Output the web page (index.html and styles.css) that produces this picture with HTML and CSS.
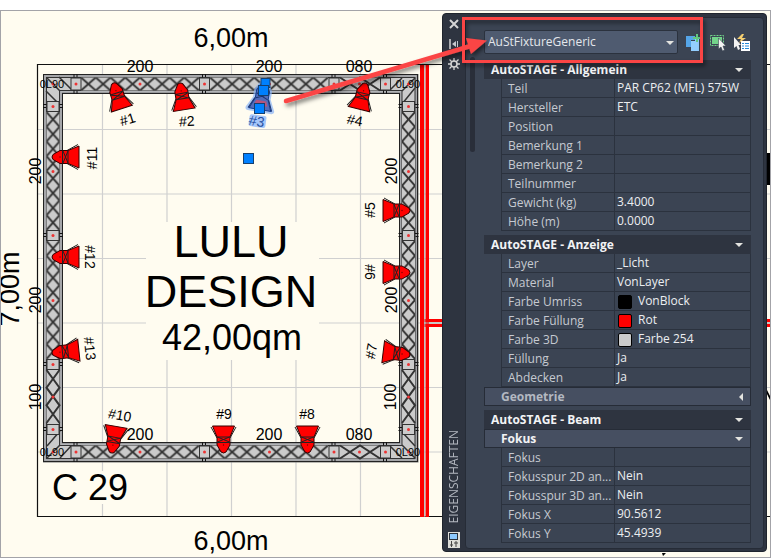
FILE: index.html
```html
<!DOCTYPE html>
<html lang="de">
<head>
<meta charset="utf-8">
<title>AutoSTAGE</title>
<link rel="stylesheet" href="styles.css">
</head>
<body>
<main class="workspace">
  <svg class="drawing" viewBox="0 0 771 558" role="img" aria-label="Standplan C 29">
    <defs>
      <clipPath id="sheet"><rect x="1" y="11" width="769" height="546"/></clipPath>
      <pattern id="lattice" width="14.75" height="13" patternUnits="userSpaceOnUse">
        <path class="brace" d="M0 0L14.75 13M0 13L14.75 0"/>
      </pattern>
      <g id="t200">
        <rect width="118" height="13" fill="#cbcbcb" y="-6.5"/>
        <rect width="118" height="13" fill="url(#lattice)" transform="translate(0 -6.5)"/>
      </g>
      <g id="t100">
        <rect width="53" height="13" fill="#cbcbcb" y="-6.5"/>
        <path class="brace" d="M0-6.5L17.7 6.5L35.3-6.5L53 6.5M0 6.5L17.7-6.5L35.3 6.5L53-6.5"/>
      </g>
      <g id="t080">
        <rect width="40" height="13" fill="#cbcbcb" y="-6.5"/>
        <path class="brace" d="M0-6.5L20 6.5L40-6.5M0 6.5L20-6.5L40 6.5"/>
      </g>
      <g id="joint">
        <rect x="-5" y="-6" width="10" height="12" fill="#cbcbcb" stroke="#333"/>
        <path d="M-2-10V-6.500M-2 6.500V10M1-10V-7M1 7V10" stroke="#111"/>
        <circle r="1.500" fill="#e33"/>
      </g>
      <g id="par">
        <path d="M-12.500 26L-6.500 15M12.500 26L6.500 15" stroke="#222" fill="none"/>
        <path d="M-2.500 1Q0-1 2.500 1L6.500 8V16L11 27H-11L-6.500 16V8Z" class="par-body"/>
        <path d="M-6.500 10.500H6.500M-6.500 16H6.500M-6 11L6 16M6 11L-6 16" stroke="#222" fill="none"/>
        <circle cy="8" r=".7" fill="#700"/>
      </g>
    </defs>
    <rect x=".5" y="10.500" width="770" height="547" fill="#fffcf0" stroke="#a3a3a8"/>
    <g clip-path="url(#sheet)">
      <path class="grid" d="M102.500 65V516M167 65V516M231.500 65V516M296 65V516M360.500 65V516M38 129.500H770M38 194H770M38 258.500H770M38 323H770M38 387.500H770M38 452H770"/>
      <path fill="#fffcf0" d="M146 222H319V360H146ZM50 471H131V504H50Z"/>
      <path d="M770 64.500H37.500V516.500H770" fill="none" stroke="#111" stroke-width="1.200"/>
      <path fill="#f00" d="M420 65H424V517H420ZM425.500 65H429V517H425.500ZM424 319H770V322H424ZM424 324H770V327H424Z"/>
      <path d="M424.800 65V517M424 323H770" stroke="#aaa"/>
      <path d="M767 153H771V185H767ZM767 390L771 398V402L767 394ZM662 553H666L663 556Z"/>

      <path fill="#777" fill-rule="evenodd" d="M43 74H418.500V462.500H43ZM63 94V442H399V94Z"/>
      <g fill="none" stroke="#222">
        <rect x="43.500" y="74.500" width="374" height="387"/>
        <rect x="62.500" y="93.500" width="337" height="349"/>
      </g>
      <g fill="none" stroke="#b5b7bb" stroke-width="1.500">
        <rect x="45" y="76" width="371" height="384"/>
        <rect x="61" y="91.800" width="340" height="352.400"/>
      </g>
      <g fill="none" stroke="#cbcbcb" stroke-width="13"><rect x="53" y="84" width="355.500" height="368"/></g>
      <g fill="none" stroke="#333">
        <rect x="46.500" y="77.500" width="368.500" height="381"/>
        <rect x="59.500" y="90.500" width="342.500" height="355"/>
      </g>
      <path stroke="#333" stroke-width="1.500" d="M47 78L60 91M59 77L72 90M46 91L59 104M415 78L402 91M402 104L415 88M390 90L402 78M47 458L60 445M47 446L60 431M60 458L71 446M415 458L402 445M402 432L415 446M390 446L402 458"/>
      <use href="#t200" x="81" y="84"/><use href="#t200" x="210" y="84"/><use href="#t080" x="340" y="84"/>
      <use href="#t200" x="81" y="452"/><use href="#t200" x="210" y="452"/><use href="#t080" x="340" y="452"/>
      <g transform="translate(53 112) rotate(90)"><use href="#t200"/><use href="#t200" x="129"/><use href="#t100" x="258"/></g>
      <g transform="translate(408.500 112) rotate(90)"><use href="#t200"/><use href="#t200" x="129"/><use href="#t100" x="258"/></g>
      <use href="#joint" x="76" y="84"/><use href="#joint" x="204.500" y="84"/><use href="#joint" x="334" y="84"/><use href="#joint" x="385.500" y="84"/>
      <use href="#joint" x="76" y="452"/><use href="#joint" x="204.500" y="452"/><use href="#joint" x="334" y="452"/><use href="#joint" x="385.500" y="452"/>
      <g transform="translate(53 0) rotate(90)"><use href="#joint" x="106.500"/><use href="#joint" x="235.500"/><use href="#joint" x="364.500"/><use href="#joint" x="429.500"/></g>
      <g transform="translate(408.500 0) rotate(90)"><use href="#joint" x="106.500"/><use href="#joint" x="235.500"/><use href="#joint" x="364.500"/><use href="#joint" x="429.500"/></g>
      <path class="dots" d="M140 84h0M269.500 84h0M359.500 84h0M140 452h0M269.500 452h0M359.500 452h0M53 171.500h0M53 300.500h0M53 397h0M408.500 171.500h0M408.500 300.500h0M408.500 397h0M53 84h0M408.500 84h0M53 452h0M408.500 452h0"/>

      <use href="#par" transform="translate(113.500 83) rotate(-18)"/>
      <use href="#par" transform="translate(180 83) rotate(-9)"/>
      <use href="#par" transform="translate(365.500 83) rotate(14)"/>
      <use href="#par" transform="translate(410 210.500) rotate(90)"/>
      <use href="#par" transform="translate(410 272.500) rotate(90)"/>
      <use href="#par" transform="translate(410 355) rotate(97)"/>
      <use href="#par" transform="translate(307.500 453) rotate(180)"/>
      <use href="#par" transform="translate(223.500 453) rotate(180)"/>
      <use href="#par" transform="translate(111.500 453) rotate(190)"/>
      <use href="#par" transform="translate(52 157) rotate(-90)"/>
      <use href="#par" transform="translate(52 257) rotate(-90)"/>
      <use href="#par" transform="translate(52 353) rotate(-96)"/>
      <g transform="translate(264.500 83) rotate(10)">
        <path d="M-2.500 1L2.500 1L6.500 8V16L12 27H-12L-6.500 16V8Z" fill="none" stroke="#8ab4f5" stroke-width="5" stroke-linejoin="round" opacity=".7"/>
        <path d="M-2.500 1L2.500 1L6.500 8V16L11 27H-11L-6.500 16V8Z" fill="#526dbb" stroke="#123a8c"/>
        <path d="M-7 23L7 23L5 18H-5Z" fill="#b4557d"/>
        <path d="M-6 11L6 16M6 11L-6 16M-12 27L-7 16M12 27L7 16" stroke="#1b3470"/>
      </g>
      <rect x="249" y="115" width="17" height="12" rx="2" fill="#a7c8fa" transform="rotate(8 257 121)"/>

      <g class="t14">
        <text transform="translate(129 124) rotate(-17)">#1</text>
        <text transform="translate(187 126) rotate(-3)">#2</text>
        <text transform="translate(256 126) rotate(9)" fill="#264f9e">#3</text>
        <text transform="translate(354 125) rotate(11)">#4</text>
        <text transform="translate(375 210) rotate(-90)">#5</text>
        <text transform="translate(365 272) rotate(90)">#6</text>
        <text transform="translate(376 352) rotate(-80)">#7</text>
        <text x="307" y="419">#8</text>
        <text x="224" y="419">#9</text>
        <text transform="translate(119 420) rotate(10)">#10</text>
        <text transform="translate(97 158) rotate(-90)">#11</text>
        <text transform="translate(85 257) rotate(90)">#12</text>
        <text transform="translate(85 349) rotate(84)">#13</text>
      </g>
      <g class="t16">
        <text x="140" y="72">200</text><text x="269" y="72">200</text><text x="359" y="72">080</text>
        <text x="140" y="440">200</text><text x="269" y="440">200</text><text x="359" y="440">080</text>
        <text transform="translate(41 171) rotate(-90)">200</text>
        <text transform="translate(41 300) rotate(-90)">200</text>
        <text transform="translate(41 397) rotate(-90)">100</text>
        <text transform="translate(397 171) rotate(-90)">200</text>
        <text transform="translate(397 300) rotate(-90)">200</text>
        <text transform="translate(396 397) rotate(-90)">100</text>
      </g>
      <g class="t11">
        <text x="52" y="88">0L90</text><text x="408" y="88">0L90</text>
        <text x="52" y="456">0L90</text><text x="408" y="456">0L90</text>
      </g>
      <g class="t27">
        <text x="231" y="47">6,00m</text><text x="231" y="550">6,00m</text>
        <text transform="translate(19 289) rotate(-90)">7,00m</text>
      </g>
      <text class="t45" x="231" y="257">LULU</text>
      <text class="t45" x="231" y="307">DESIGN</text>
      <text class="t36" x="232" y="350">42,00qm</text>
      <text class="t36" x="90" y="500">C 29</text>
      <g fill="#0080ff" stroke="#16406f">
        <rect x="261" y="78.500" width="9" height="9"/><rect x="258.500" y="85.500" width="10" height="10"/>
        <rect x="254.500" y="103.500" width="10" height="10"/><rect x="243.500" y="153.500" width="10" height="10"/>
      </g>
    </g>
  </svg>

  <aside class="palette" aria-label="Eigenschaften">
    <div class="strip">
      <button class="icon" aria-label="Schließen"><svg width="12" height="12" viewBox="0 0 12 12"><path d="M2 2L10 10M10 2L2 10" stroke="#d5d5d5" stroke-width="2"/></svg></button>
      <button class="icon" aria-label="Automatisch ausblenden"><svg width="12" height="12" viewBox="0 0 12 12"><path d="M2 1V11" stroke="#d5d5d5" stroke-width="1.500"/><path d="M8 3V9L4 6ZM9 3h1v6H9Z" fill="#c5c8cd"/></svg></button>
      <button class="icon" aria-label="Einstellungen"><svg width="12" height="12" viewBox="0 0 12 12"><path d="M6 0V12M0 6H12M1.500 1.500L10.500 10.500M10.500 1.500L1.500 10.500" stroke="#d5d5d5" stroke-width="1.300"/><circle cx="6" cy="6" r="3" fill="#2e3440" stroke="#d5d5d5" stroke-width="1.500"/></svg></button>
      <span class="name">EIGENSCHAFTEN</span>
      <svg class="mark" width="12" height="16" viewBox="0 0 12 16"><rect width="12" height="16" fill="#deded9"/><rect x="1.500" y="1.500" width="8" height="6" fill="#8dcaff" stroke="#29313c"/><path d="M3.500 9V15M8 9V15M2 13H5M6 11H10" stroke="#444"/></svg>
    </div>
    <div class="content">
      <div class="toolbar">
        <label class="combo"><select aria-label="Objekttyp"><option>AuStFixtureGeneric</option></select><i class="down"></i></label>
        <button class="icon" aria-label="PICKADD"><svg width="17" height="17" viewBox="0 0 17 17"><path d="M1 2h9v4H6v7H1Z" fill="#55a5e8"/><path d="M6 7H10V4H14V17H6Z" fill="#94ceff"/><path d="M12 0V8M8 4H17" stroke="#61c982" stroke-width="2"/></svg></button>
        <button class="icon" aria-label="Objekte wählen"><svg width="17" height="17" viewBox="0 0 17 17"><rect x="1.500" y="1.500" width="13" height="10" fill="none" stroke="#72d48a" stroke-dasharray="2 1"/><rect x="3" y="3" width="10" height="7" fill="#72d48a"/><path d="M9.500 4V15L12 13L13.500 17L15.500 16L14 12H17Z" fill="#f3f3f3" stroke="#3b4453" stroke-width=".6"/></svg></button>
        <button class="icon" aria-label="Schnellauswahl"><svg width="17" height="17" viewBox="0 0 17 17"><path d="M9 0L4 5H8L6 9L13 4H9L11 0Z" fill="#f5cf70"/><path d="M1 3V14L3.500 12L5 16L7 15L5.500 11H8Z" fill="#f3f3f3"/><rect x="8" y="7" width="9" height="10" fill="#fff"/><path d="M9 9.500H11M12 9.500H16M9 12H11M12 12H16M9 14.500H11M12 14.500H16" stroke="#2389d7"/></svg></button>
      </div>
      <div class="scroll"></div>
      <div class="sections">
        <section>
          <button class="head">AutoSTAGE - Allgemein<i class="down"></i></button>
          <table>
            <tr><th>Teil</th><td>PAR CP62 (MFL) 575W</td></tr>
            <tr><th>Hersteller</th><td>ETC</td></tr>
            <tr><th>Position</th><td></td></tr>
            <tr><th>Bemerkung 1</th><td></td></tr>
            <tr><th>Bemerkung 2</th><td></td></tr>
            <tr><th>Teilnummer</th><td></td></tr>
            <tr><th>Gewicht (kg)</th><td>3.4000</td></tr>
            <tr><th>Höhe (m)</th><td>0.0000</td></tr>
          </table>
        </section>
        <section>
          <button class="head">AutoSTAGE - Anzeige<i class="down"></i></button>
          <table>
            <tr><th>Layer</th><td>_Licht</td></tr>
            <tr><th>Material</th><td>VonLayer</td></tr>
            <tr><th>Farbe Umriss</th><td><i class="swatch black"></i>VonBlock</td></tr>
            <tr><th>Farbe Füllung</th><td><i class="swatch red"></i>Rot</td></tr>
            <tr><th>Farbe 3D</th><td><i class="swatch grey"></i>Farbe 254</td></tr>
            <tr><th>Füllung</th><td>Ja</td></tr>
            <tr><th>Abdecken</th><td>Ja</td></tr>
          </table>
          <button class="head sub closed">Geometrie<i class="left"></i></button>
        </section>
        <section>
          <button class="head">AutoSTAGE - Beam<i class="down"></i></button>
          <button class="head sub">Fokus<i class="down"></i></button>
          <table>
            <tr><th>Fokus</th><td></td></tr>
            <tr><th>Fokusspur 2D an...</th><td>Nein</td></tr>
            <tr><th>Fokusspur 3D an...</th><td>Nein</td></tr>
            <tr><th>Fokus X</th><td>90.5612</td></tr>
            <tr><th>Fokus Y</th><td>45.4939</td></tr>
          </table>
        </section>
      </div>
    </div>
  </aside>

  <svg class="callout" viewBox="0 0 771 558" aria-hidden="true">
    <defs><filter id="shade" x="-10%" y="-30%" width="120%" height="180%"><feDropShadow dx="2" dy="3" stdDeviation="2" flood-color="#000" flood-opacity=".5"/></filter></defs>
    <g filter="url(#shade)">
      <path d="M286 101L474 45" stroke="#fb4545" stroke-width="4.500" stroke-linecap="round"/>
      <path d="M487 40.500L466 38L471 54Z" fill="#fb4545"/>
      <rect x="463.500" y="18.500" width="238" height="43" fill="none" stroke="#fb4545" stroke-width="3"/>
    </g>
  </svg>
</main>
</body>
</html>
```
FILE: styles.css
```css
* { box-sizing: border-box; }
body { margin: 0; background: #fff; font-family: "Open Sans", "Noto Sans", sans-serif; font-size: 12px; }
.workspace { position: relative; overflow: hidden; }
.drawing { display: block; width: 100%; height: auto; font-family: "Liberation Sans", Arial, sans-serif; }
.drawing text { text-anchor: middle; }
.grid { fill: none; stroke: #d0d0d0; stroke-width: 1.2; }
.brace { fill: none; stroke: #333; stroke-width: 2; }
.dots { fill: none; stroke: #e33; stroke-width: 3; stroke-linecap: round; }
.par-body { fill: #f00; stroke: #300; }
.t11 { font-size: 11px; }
.t14 { font-size: 14px; }
.t16 { font-size: 16px; }
.t27 { font-size: 27px; }
.t36 { font-size: 36px; }
.t45 { font-size: 45px; }
.callout { position: absolute; top: 0; left: 0; width: 100%; height: auto; pointer-events: none; }

.palette {
  position: absolute; top: 13px; right: 4px; width: 325px;
  display: flex; padding: 3px 2px 2px 0;
  background: #2e3440; border: 1px solid #1f242d; border-radius: 4px;
}
button { border: 0; padding: 0; margin: 0; background: none; color: inherit; font: inherit; }
.icon { display: flex; }
.strip { width: 22px; display: flex; flex-direction: column; align-items: center; gap: 8px; padding: 1px 0; }
.name { margin-top: auto; writing-mode: vertical-rl; transform: rotate(180deg); color: #b4b8c0; line-height: 16px; }
.mark { display: block; }
.content {
  position: relative; flex: 1; min-width: 0; padding: 12px 12px 5px 18px;
  background: #3b4453; border: 1px solid #262c37; border-radius: 4px;
}
.toolbar { display: flex; align-items: center; gap: 7px; height: 24px; margin-bottom: 6px; padding-right: 1px; }
.combo { position: relative; flex: 1; height: 24px; }
.combo select {
  appearance: none; width: 100%; height: 24px; padding: 0 3px 2px; font: inherit;
  color: #e4e7ec; background: #4f5b70; border: 1px solid #2b323e; border-radius: 2px;
}
.combo .down { position: absolute; right: 4px; top: 11px; }
.down { border: 4px solid transparent; border-top-color: #e4e4e0; border-bottom: 0; }
.left { border: 4px solid transparent; border-right-color: #e4e4e0; border-left: 0; }
.scroll { position: absolute; left: 4px; top: 39px; width: 5px; height: 95px; border-radius: 3px; background: #292e39; }
.sections { display: flex; flex-direction: column; gap: 4px; }
.head {
  display: flex; align-items: center; justify-content: space-between; width: 100%; height: 19px;
  padding: 0 8px 0 7px; background: #2e3440; color: #f2f3f5; font-weight: bold; line-height: 19px;
}
.sub { padding: 0 7px 0 16px; background: #464f61; border: 1px solid #262c37; line-height: 17px; }
.closed { color: #b3b8c1; }
table { width: calc(100% - 17px); margin-left: 17px; border-collapse: separate; border-spacing: 0; table-layout: fixed; border-left: 1px solid #2b323e; }
th, td { height: 19px; padding: 0; line-height: 18px; border-right: 1px solid #2b323e; border-bottom: 1px solid #2b323e; text-align: left; vertical-align: top; white-space: nowrap; }
th { width: 113px; padding-top: 2px; padding-left: 6px; line-height: 16px; color: #c6cad1; font-weight: normal; }
td { padding-left: 2px; color: #eceef1; }
.swatch { display: inline-block; width: 14px; height: 14px; margin: 0 6px 0 1px; border: 1px solid #000; border-radius: 2px; vertical-align: middle; }
.black { background: #000; }
.red { background: #f00; }
.grey { background: #cbcbcb; }
```
